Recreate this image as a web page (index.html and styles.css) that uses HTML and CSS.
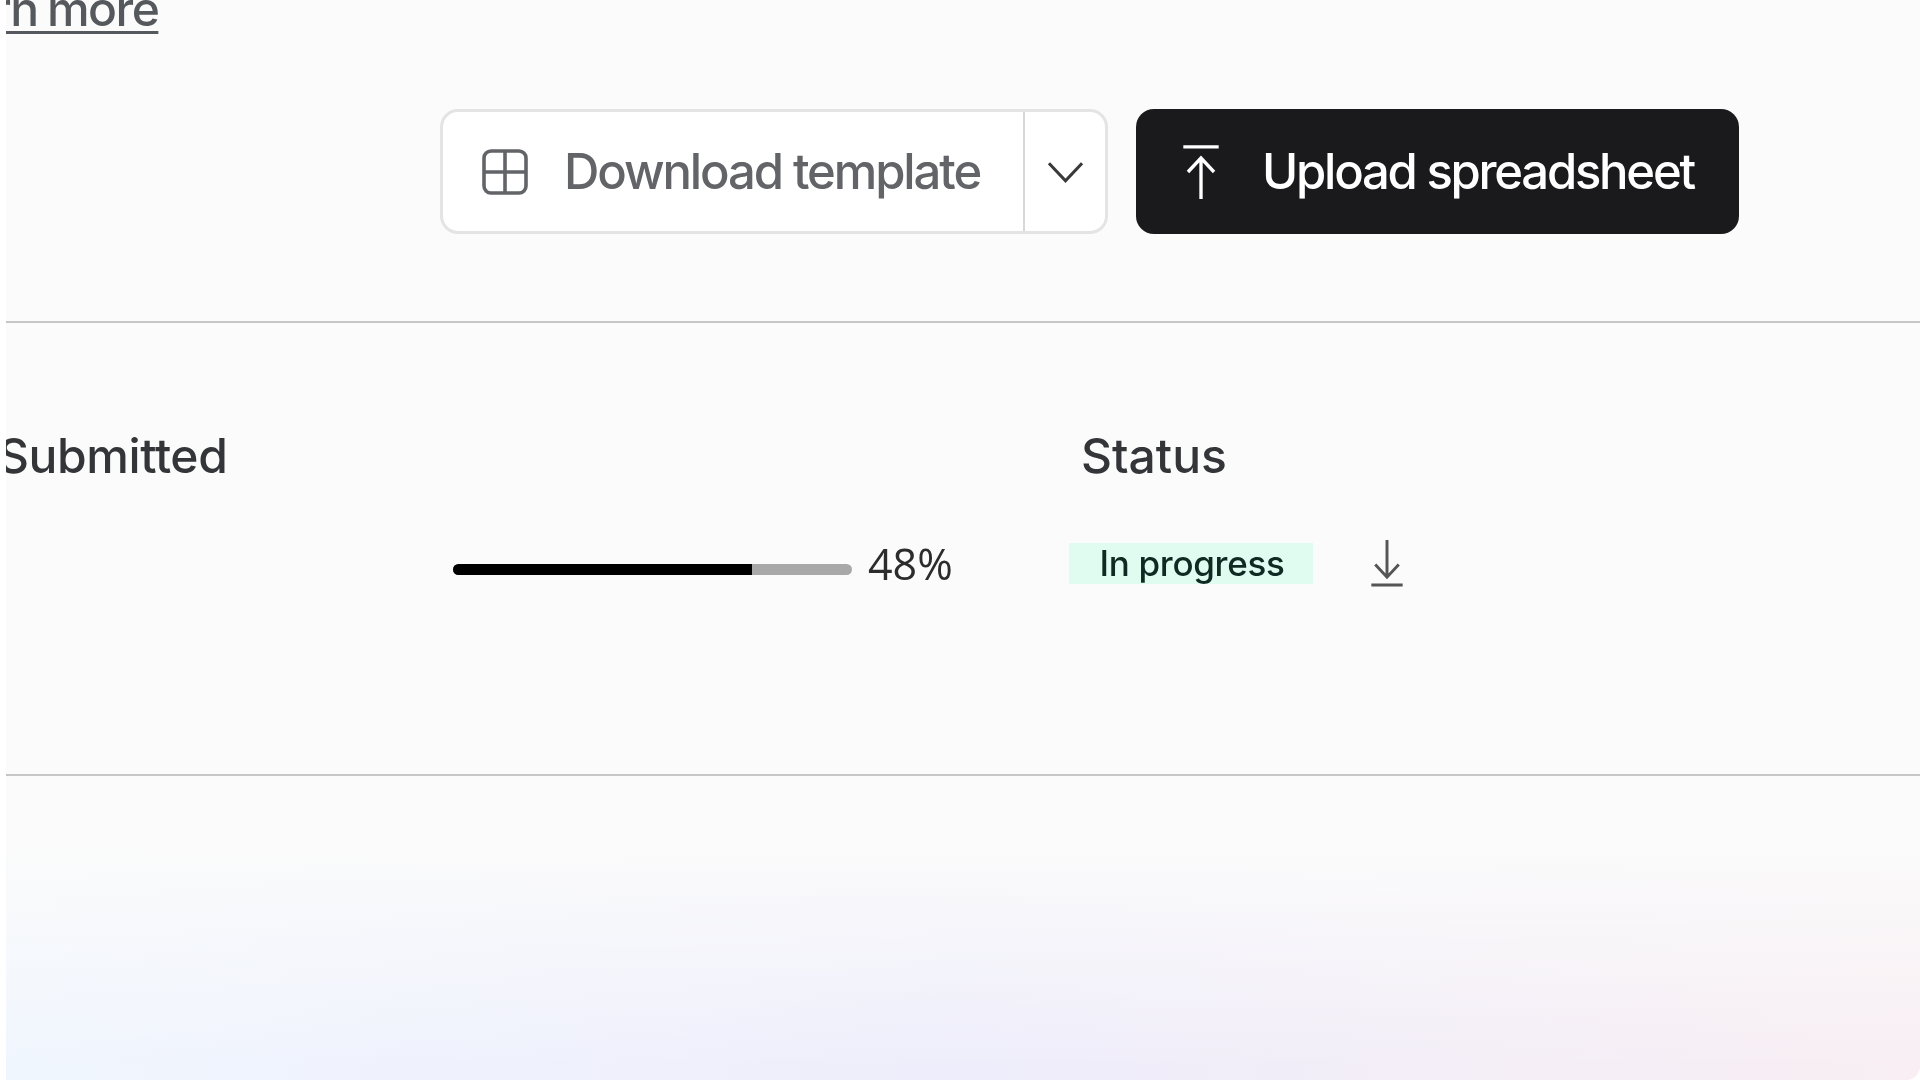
FILE: index.html
```html
<!DOCTYPE html>
<html lang="en">
<head>
<meta charset="utf-8">
<title>Uploads</title>
<link rel="stylesheet" href="styles.css">
</head>
<body>
<main class="panel">
  <header class="top">
    <a class="learn" href="#">Learn more</a>
    <div class="actions">
      <div class="split">
        <button class="split-main">
          <svg class="icon-grid" viewBox="0 0 46 46" fill="none" stroke="currentColor" stroke-width="3.6"><rect x="2" y="2" width="42" height="42" rx="7"/><path d="M23 2v42M2 23h42"/></svg>
          <span>Download template</span>
        </button>
        <button class="split-caret" aria-label="More">
          <svg viewBox="0 0 38 24" fill="none" stroke="currentColor" stroke-width="3.2"><path d="M2 3l17 18L36 3"/></svg>
        </button>
      </div>
      <button class="upload">
        <svg class="icon-up" viewBox="0 0 40 58" fill="none" stroke="currentColor" stroke-width="3.6"><path d="M1 2h38M20 58V14M6 29l14-15 14 15"/></svg>
        <span>Upload spreadsheet</span>
      </button>
    </div>
  </header>
  <section class="table">
    <div class="th th-sub">Submitted</div>
    <div class="th"></div>
    <div class="th th-status">Status</div>
    <div></div>
    <div class="progress">
      <div class="bar"><div class="fill" style="width:75%"></div></div>
      <span class="pct">48%</span>
    </div>
    <div class="status-cell">
      <span class="pill">In progress</span>
      <svg class="icon-down" viewBox="0 0 32 48" fill="none" stroke="currentColor" stroke-width="3"><path d="M16 0v38M4 25l12 13 12-13M0 46h32"/></svg>
    </div>
  </section>
  <div class="glow"></div>
</main>
</body>
</html>
```
FILE: styles.css
```css
* { box-sizing: border-box; }
html, body { margin: 0; height: 100%; background: #fff; }
body { font-family: Inter, "Liberation Sans", sans-serif; overflow: hidden; }
.panel {
  margin-left: 6px;
  height: 1080px;
  display: flex;
  flex-direction: column;
  background: #fbfbfb;
  overflow: hidden;
  border-bottom-right-radius: 14px;
  filter: blur(0.6px);
}
.top {
  height: 323px;
  flex: none;
  display: flex;
  align-items: flex-start;
  border-bottom: 2px solid #c6c6c6;
}
.learn {
  margin: -17px 0 0 -92px;
  font-size: 48px;
  line-height: 52px;
  font-weight: 500;
  letter-spacing: -1.5px;
  word-spacing: -2px;
  color: #55585c;
  text-decoration: underline;
  text-decoration-thickness: 3px;
  text-underline-offset: 5px;
}
.actions {
  margin: 109px 181px 0 auto;
  display: flex;
  align-items: center;
  gap: 28px;
}
button { font: inherit; cursor: pointer; }
.split {
  width: 668px;
  height: 125px;
  display: flex;
  background: #fff;
  border: 3px solid #e4e4e4;
  border-radius: 18px;
}
.split-main {
  flex: 1;
  display: flex;
  align-items: center;
  gap: 36px;
  padding: 0 0 0 39px;
  border: 0;
  border-right: 2px solid #d8d8d8;
  background: none;
  color: #626468;
  font-size: 49px;
  font-weight: 500;
  letter-spacing: -2.1px;
}
.icon-grid { width: 46px; height: 46px; flex: none; }
.split-caret {
  width: 80px;
  flex: none;
  border: 0;
  background: none;
  display: flex;
  align-items: center;
  justify-content: center;
  color: #3a3a3c;
  padding: 0;
}
.split-caret svg { width: 37px; height: 24px; }
.upload {
  width: 603px;
  height: 125px;
  display: flex;
  align-items: center;
  gap: 42px;
  padding: 0 0 0 46px;
  border: 0;
  border-radius: 18px;
  background: #1a1a1c;
  color: #fff;
  font-size: 49px;
  font-weight: 500;
  letter-spacing: -2.25px;
}
.icon-up { width: 38px; height: 54px; flex: none; }
.table {
  flex: none;
  height: 453px;
  display: grid;
  grid-template-columns: 447px 616px 1fr;
  grid-template-rows: 159px 162px;
  align-content: start;
  border-bottom: 2px solid #c6c6c6;
}
.th {
  align-self: end;
  font-size: 48px;
  line-height: 52px;
  font-weight: 500;
  color: #333538;
}
.th-sub { margin-left: -8px; letter-spacing: -0.4px; }
.th-status { padding-left: 12px; }
.progress {
  display: flex;
  align-items: center;
  gap: 16px;
}
.bar {
  width: 399px;
  height: 11px;
  margin-top: 12px;
  flex: none;
  border-radius: 6px;
  background: #a8a8a8;
  overflow: hidden;
}
.fill { height: 100%; background: #000; }
.pct {
  font-family: "Open Sans", sans-serif;
  font-size: 43px;
  font-weight: 400;
  color: #2c2c2c;
  white-space: nowrap;
}
.status-cell {
  display: flex;
  align-items: center;
  gap: 58px;
}
.pill {
  width: 244px;
  height: 41px;
  display: flex;
  align-items: center;
  justify-content: center;
  padding-left: 2px;
  background: #e0fbf0;
  color: #0f2a22;
  font-size: 35px;
  font-weight: 500;
  letter-spacing: -0.3px;
}
.icon-down { width: 32px; height: 47px; flex: none; color: #555; }
.glow {
  flex: 1;
  background:
    linear-gradient(to bottom, #fbfbfb 22%, rgba(251, 251, 251, 0) 96%),
    linear-gradient(to right, #f0f6fe 0%, #eeedfb 50%, #f8eef3 100%);
}
```
